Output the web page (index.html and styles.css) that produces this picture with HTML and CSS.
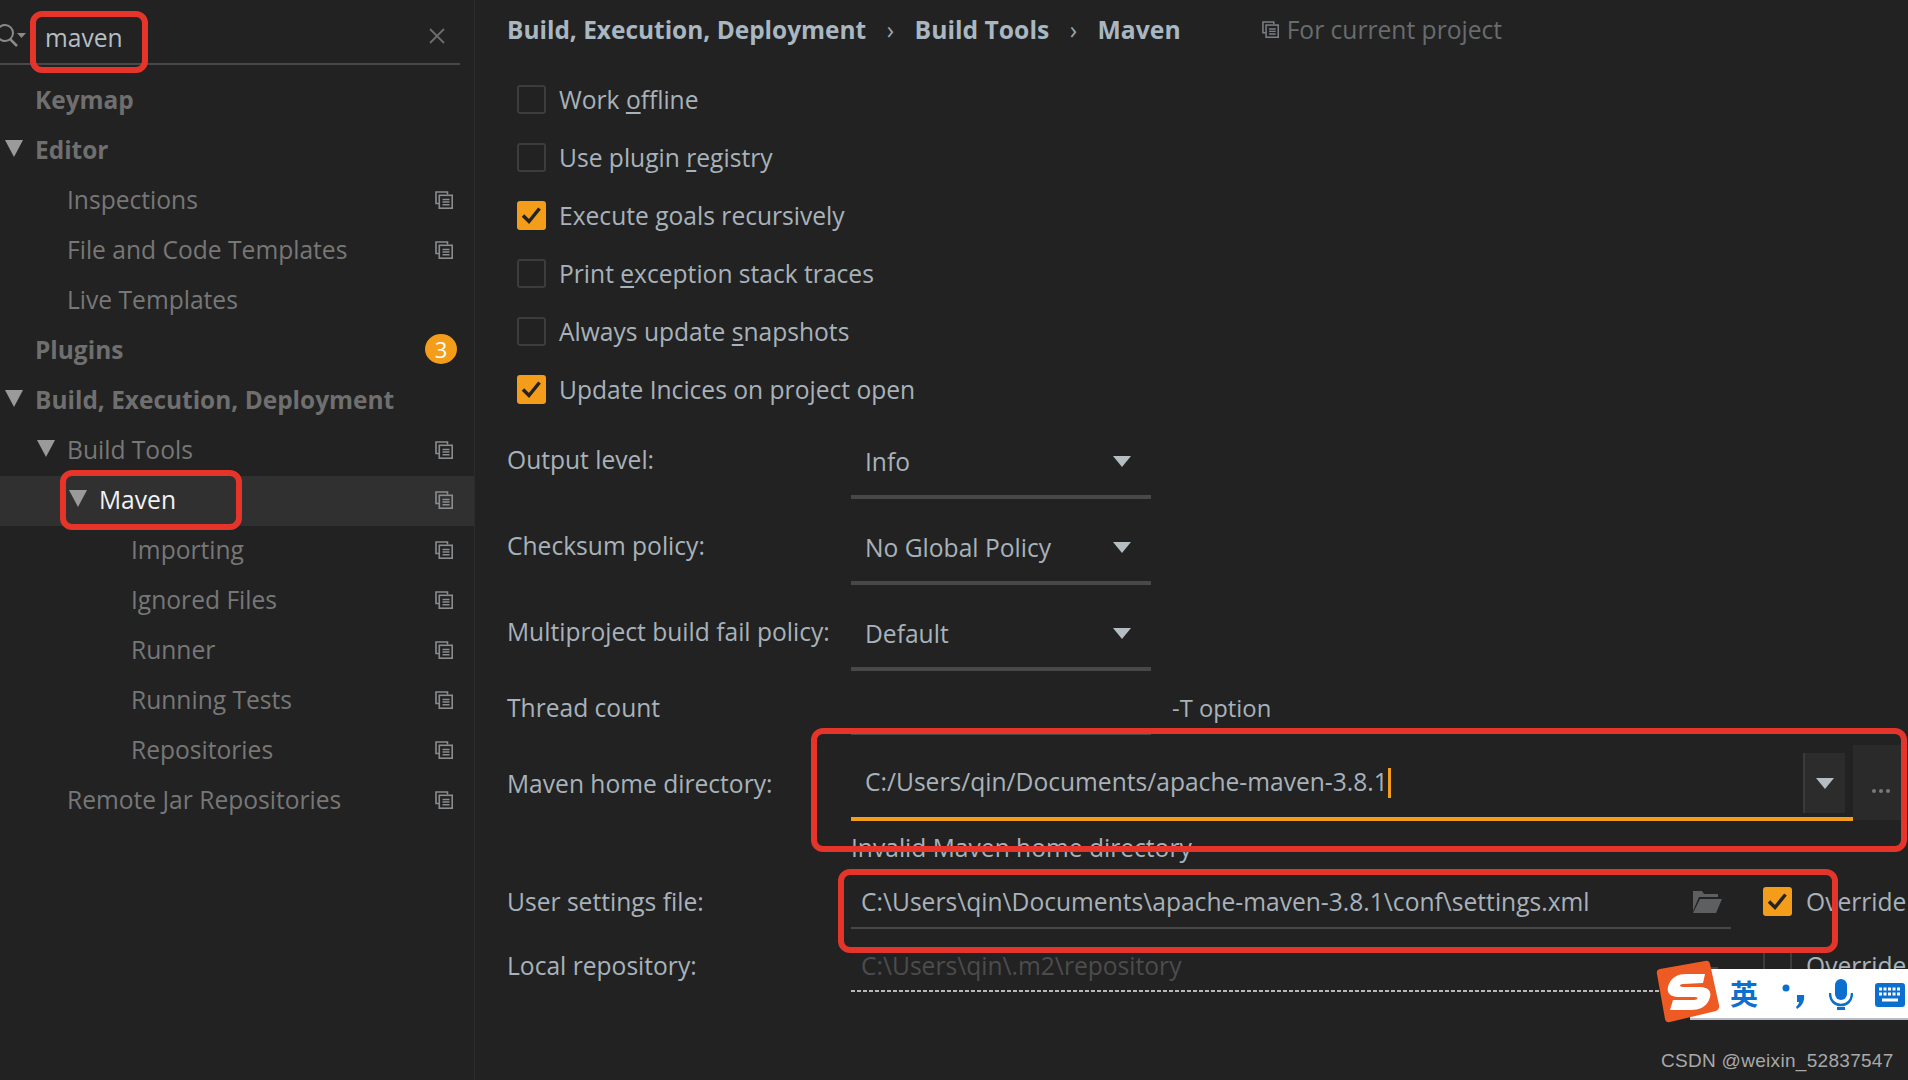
FILE: index.html
```html
<!DOCTYPE html>
<html lang="en">
<head>
<meta charset="utf-8">
<title>Maven settings</title>
<link rel="stylesheet" href="styles.css">
</head>
<body>
<svg class="defs" width="0" height="0" aria-hidden="true">
  <symbol id="copy" viewBox="0 0 18 18">
    <path d="M12.5 3.5V1H1v11.5h3" fill="none" stroke="currentColor" stroke-width="1.6"/>
    <rect x="4.3" y="4.3" width="12.9" height="12.9" fill="none" stroke="currentColor" stroke-width="1.6"/>
    <path d="M7.5 8.500h7M7.500 11h7M7.500 13.800h7" stroke="currentColor" stroke-width="1.5"/>
  </symbol>
  <symbol id="tick" viewBox="0 0 29 29">
    <path d="M6 14.500l6 6 10.500-13" fill="none" stroke="#232323" stroke-width="3.500"/>
  </symbol>
</svg>
<div class="app">
  <aside class="side">
    <div class="search">
      <svg class="search-icon" width="30" height="24" viewBox="0 0 30 24"><circle cx="8" cy="9" r="8" fill="none" stroke="#8a8a8a" stroke-width="2"/><path d="M13 15l7 7" stroke="#8a8a8a" stroke-width="2.500"/><path d="M20 9h9l-4.500 5z" fill="#8a8a8a"/></svg>
      <span class="search-text">maven</span>
      <svg class="search-x" width="16" height="16" viewBox="0 0 16 16"><path d="M1 1l14 14M15 1L1 15" stroke="#6d6d6d" stroke-width="1.800"/></svg>
    </div>
    <ul class="tree">
      <li class="row head l0"><span class="name">Keymap</span></li>
      <li class="row head l0"><i class="tri"></i><span class="name">Editor</span></li>
      <li class="row l1"><span class="name">Inspections</span><svg class="cp"><use href="#copy"/></svg></li>
      <li class="row l1"><span class="name">File and Code Templates</span><svg class="cp"><use href="#copy"/></svg></li>
      <li class="row l1"><span class="name">Live Templates</span></li>
      <li class="row head l0"><span class="name">Plugins</span><span class="badge">3</span></li>
      <li class="row head l0"><i class="tri"></i><span class="name">Build, Execution, Deployment</span></li>
      <li class="row l1"><i class="tri"></i><span class="name">Build Tools</span><svg class="cp"><use href="#copy"/></svg></li>
      <li class="row l1b sel"><i class="tri"></i><span class="name">Maven</span><svg class="cp"><use href="#copy"/></svg></li>
      <li class="row l2"><span class="name">Importing</span><svg class="cp"><use href="#copy"/></svg></li>
      <li class="row l2"><span class="name">Ignored Files</span><svg class="cp"><use href="#copy"/></svg></li>
      <li class="row l2"><span class="name">Runner</span><svg class="cp"><use href="#copy"/></svg></li>
      <li class="row l2"><span class="name">Running Tests</span><svg class="cp"><use href="#copy"/></svg></li>
      <li class="row l2"><span class="name">Repositories</span><svg class="cp"><use href="#copy"/></svg></li>
      <li class="row l1"><span class="name">Remote Jar Repositories</span><svg class="cp"><use href="#copy"/></svg></li>
    </ul>
  </aside>
  <main class="main">
    <header class="crumbs">
      <b>Build, Execution, Deployment</b><span class="sep">›</span><b>Build Tools</b><span class="sep">›</span><b>Maven</b>
      <span class="scope"><svg class="cp-s"><use href="#copy"/></svg>For current project</span>
    </header>
    <div class="checks">
      <div class="check"><i class="box"></i><span>Work <u>o</u>ffline</span></div>
      <div class="check"><i class="box"></i><span>Use plugin <u>r</u>egistry</span></div>
      <div class="check"><i class="box on"><svg><use href="#tick"/></svg></i><span>Execute <u>g</u>oals recursively</span></div>
      <div class="check"><i class="box"></i><span>Print <u>e</u>xception stack traces</span></div>
      <div class="check"><i class="box"></i><span>Always update <u>s</u>napshots</span></div>
      <div class="check"><i class="box on"><svg><use href="#tick"/></svg></i><span>Update Incices on project open</span></div>
    </div>
    <div class="form">
      <div class="frow combo-row"><span class="lab">Output level:</span><div class="combo"><span>Info</span><i class="caret"></i></div></div>
      <div class="frow combo-row"><span class="lab">Checksum policy:</span><div class="combo"><span>No Global Policy</span><i class="caret"></i></div></div>
      <div class="frow combo-row"><span class="lab">Multiproject build fail policy:</span><div class="combo"><span>Default</span><i class="caret"></i></div></div>
      <div class="frow thread-row"><span class="lab">Thread count</span><div class="thread"><span class="thread-input"></span><span class="thread-hint">-T option</span></div></div>
      <div class="frow home-row"><span class="lab">Maven home directory:</span>
        <div class="home">
          <div class="home-input"><span class="home-text">C:/Users/qin/Documents/apache-maven-3.8.1</span><i class="cursor"></i><span class="home-drop"><i class="caret"></i></span></div>
          <div class="more"><i></i><i></i><i></i></div>
        </div>
      </div>
      <div class="frow err-row"><span></span><span class="err">Invalid Maven home directory</span></div>
      <div class="frow user-row"><span class="lab">User settings file:</span>
        <div class="path"><span class="path-text">C:\Users\qin\Documents\apache-maven-3.8.1\conf\settings.xml</span>
          <svg class="folder" width="30" height="22" viewBox="0 0 30 22"><path d="M1 0h9l2 3h14v3H7L1 20z" fill="#5d5f61"/><path d="M8 8h22l-6 14H1z" fill="#5d5f61"/></svg>
        </div>
        <i class="box on"><svg><use href="#tick"/></svg></i><span class="over">Override</span>
      </div>
      <div class="frow local-row"><span class="lab">Local repository:</span>
        <div class="path dotted"><span class="path-text dim">C:\Users\qin\.m2\repository</span>
          <svg class="folder" width="30" height="22" viewBox="0 0 30 22"><path d="M1 0h9l2 3h14v3H7L1 20z" fill="#444"/><path d="M8 8h22l-6 14H1z" fill="#444"/></svg>
        </div>
        <i class="box"></i><span class="over">Override</span>
      </div>
    </div>
  </main>
  <i class="mark m-search"></i>
  <i class="mark m-maven"></i>
  <i class="mark m-home"></i>
  <i class="mark m-user"></i>
  <div class="ime">
    <svg class="ime-logo" width="66" height="64" viewBox="0 0 66 64"><path d="M3 14Q2 10 6 9L51 1q4-1 5 3l9 41q1 4-3 6L16 62q-4 1-5-3z" fill="#ee5a24"/><path d="M51 14l-2 9-20 1c-4 0-4 3 0 3h16c12 0 13 7 10 13-3 7-10 10-18 10H16l3-10 21 0c4 0 5-3 1-3H26C14 37 12 31 15 24c3-7 9-10 17-10z" fill="#fff"/></svg>
    <span class="ime-zh">英</span>
    <svg class="ime-punc" width="24" height="30" viewBox="0 0 24 30"><circle cx="4" cy="7" r="3.500" fill="#0b6fd0"/><path d="M15 14h7c1 6-2 11-7 14l-1-2c2-2 3-4 3-5h-2z" fill="#0b6fd0"/></svg>
    <svg class="ime-mic" width="24" height="32" viewBox="0 0 24 32"><rect x="6" y="0" width="12" height="21" rx="6" fill="#0b6fd0"/><path d="M1 14c0 8 5 12 11 12s11-4 11-12" fill="none" stroke="#0b6fd0" stroke-width="2.500"/><rect x="8" y="28" width="8" height="3" fill="#0b6fd0"/></svg>
    <svg class="ime-key" width="30" height="24" viewBox="0 0 30 24"><rect width="30" height="24" rx="3" fill="#0b6fd0"/><path d="M4 6h22M4 11h22" stroke="#fff" stroke-width="3" stroke-dasharray="3 1.500"/><path d="M7 17h16" stroke="#fff" stroke-width="3"/></svg>
  </div>
  <div class="wm">CSDN @weixin_52837547</div>
</div>
</body>
</html>
```
FILE: styles.css
```css
* { box-sizing: border-box; }
html, body { margin: 0; padding: 0; }
body { background: #222; font-family: "Open Sans", "Noto Sans", sans-serif; font-size: 24.6px; color: #a8b2ba; overflow: hidden; }
i { display: block; }
.defs { position: absolute; }
.app { position: relative; display: flex; width: 1908px; height: 1080px; overflow: hidden; }

.side { width: 475px; flex: none; border-right: 1px solid #2c2c2c; color: #777; }
.search { height: 65px; margin-right: 14px; border-bottom: 2px solid #484848; display: flex; align-items: center; position: relative; }
.search-icon { margin-left: -3px; margin-top: 8px; flex: none; }
.search-text { margin-left: 18px; margin-top: 11px; color: #b4bec6; }
.search-x { margin-left: auto; margin-right: 15px; margin-top: 8px; }
.tree { list-style: none; margin: 11px 0 0; padding: 0; }
.row { height: 50px; display: flex; align-items: center; position: relative; padding-right: 21px; }
.row .name { white-space: nowrap; margin-bottom: 4px; }
.row .cp { margin-left: auto; margin-bottom: 2px; }
.cp { width: 18px; height: 18px; color: #8a8d90; flex: none; }
.head { color: #6f6f6f; font-weight: 700; font-size: 24.450px; }
.l0 { padding-left: 35px; }
.l1 { padding-left: 67px; }
.l1b { padding-left: 99px; }
.l2 { padding-left: 131px; }
.tri { position: absolute; width: 0; height: 0; border-left: 9px solid transparent; border-right: 9px solid transparent; border-top: 17px solid #9a9a9a; margin-top: -5px; }
.l0 .tri { left: 5px; }
.l1 .tri { left: 37px; }
.l1b .tri { left: 69px; }
.sel { background: #303030; }
.sel .name { color: #f2f2f2; }
.badge { margin-left: auto; margin-right: -4px; margin-bottom: 4px; width: 32px; height: 30px; border-radius: 50%; background: #f49d1a; color: #fff; display: flex; align-items: center; justify-content: center; font-size: 22px; font-weight: 400; }

.main { flex: 1; padding-left: 32px; min-width: 0; }
.crumbs { height: 60px; padding-bottom: 2px; display: flex; align-items: center; white-space: nowrap; color: #a9b7c1; }
.crumbs b { font-weight: 700; font-size: 24.700px; }
.crumbs b:first-child { font-size: 24.450px; }
.sep { margin: 0 20.500px; color: #9aa4ab; }
.scope { margin-left: 81px; color: #686c6f; display: flex; align-items: center; }
.cp-s { width: 17px; height: 17px; color: #7c7f82; margin-right: 8px; }
.checks { padding-top: 10px; }
.check { height: 58px; display: flex; align-items: center; gap: 13px; padding-left: 10px; white-space: nowrap; }
.box { width: 29px; height: 29px; flex: none; border: 2px solid #3c3c3c; border-radius: 3px; }
.box.on { background: #f49d1a; border: 0; }
.box svg { width: 29px; height: 29px; display: block; }
.check u { text-underline-offset: 3px; }

.form { margin-top: -5px; }
.frow { display: grid; grid-template-columns: 344px 1fr; align-items: start; white-space: nowrap; }
.lab { color: #a8b2ba; }
.combo-row { height: 86px; }
.combo-row .lab { margin-top: 30px; }
.combo { width: 300px; height: 86px; border-bottom: 4px solid #484848; padding: 32px 20px 0 14px; display: flex; justify-content: space-between; }
.caret { width: 0; height: 0; border-left: 9px solid transparent; border-right: 9px solid transparent; border-top: 11px solid #b4bec2; margin-top: 11px; }
.thread-row { height: 65px; }
.thread-row .lab { margin-top: 20px; }
.thread { display: flex; padding-top: 21px; }
.thread-input { width: 300px; height: 43px; margin-right: 21px; border-bottom: 4px solid #484848; }
.thread-hint { font-size: 23.800px; }
.home-row { height: 87px; }
.home-row .lab { margin-top: 31px; }
.home { display: flex; height: 85px; align-items: flex-start; }
.home-input { width: 1002px; height: 85px; border-bottom: 4px solid #f49d1a; display: flex; position: relative; padding: 29px 0 0 14px; }
.cursor { width: 3px; height: 30px; background: #f49d1a; margin-top: 3px; }
.home-drop { position: absolute; right: 8px; top: 17px; width: 42px; height: 60px; background: #2c2c2c; border-left: 2px solid #3a3a3a; display: flex; align-items: center; justify-content: center; }
.home-drop .caret { margin-top: 0; }
.more { flex: none; width: 55px; height: 75px; margin-top: 9px; background: #2a2a2a; display: flex; align-items: center; justify-content: center; gap: 3px; padding-top: 17px; }
.more i { width: 4px; height: 4px; border-radius: 50%; background: #77797b; }
.err-row { height: 52px; }
.err { margin-top: 8px; color: #a8b2ba; }
.user-row { height: 55px; grid-template-columns: 344px 880px 32px 29px auto; }
.local-row { height: 63px; grid-template-columns: 344px 880px 32px 29px auto; }
.user-row .box, .local-row .box { grid-column: 4; }
.user-row .lab { margin-top: 10px; }
.local-row .lab { margin-top: 19px; }
.path { height: 54px; border-bottom: 2px solid #484848; padding: 10px 0 0 10px; display: flex; justify-content: space-between; position: relative; }
.local-row .path { height: 62px; padding-top: 19px; border-bottom: 0; background: repeating-linear-gradient(90deg, #b8b8b8 0 4px, transparent 4px 6px) left bottom / 100% 2px no-repeat; }
.path-text { color: #a8b2ba; }
.path-text.dim { color: #4c4c4c; }
.folder { margin: 6px 9px 0 0; }
.local-row .folder { margin-top: 15px; }
.user-row .box { margin-top: 12px; }
.local-row .box { margin-top: 18px; }
.over { margin-left: 14px; margin-top: 10px; }
.local-row .over { margin-top: 19px; }

.mark { position: absolute; border: 6px solid #e5352b; border-radius: 12px; }
.m-search { left: 30px; top: 11px; width: 118px; height: 62px; }
.m-maven { left: 60px; top: 470px; width: 182px; height: 60px; }
.m-home { left: 811px; top: 728px; width: 1096px; height: 124px; }
.m-user { left: 838px; top: 869px; width: 1000px; height: 84px; }

.ime { position: absolute; left: 1690px; top: 969px; width: 218px; height: 51px; background: #fff; border-bottom: 2px solid #b8bcc8; }
.ime-logo { position: absolute; left: -36px; top: -9px; }
.ime-zh { position: absolute; left: 40px; top: 5px; font: 700 28px/38px "Noto Sans CJK SC", sans-serif; color: #0b6fd0; }
.ime-punc { position: absolute; left: 92px; top: 12px; }
.ime-mic { position: absolute; left: 139px; top: 10px; }
.ime-key { position: absolute; left: 185px; top: 14px; }
.wm { position: absolute; left: 1661px; top: 1049px; font: 19px/24px "Liberation Sans", sans-serif; color: #a9a9a9; letter-spacing: .3px; white-space: nowrap; }
```
